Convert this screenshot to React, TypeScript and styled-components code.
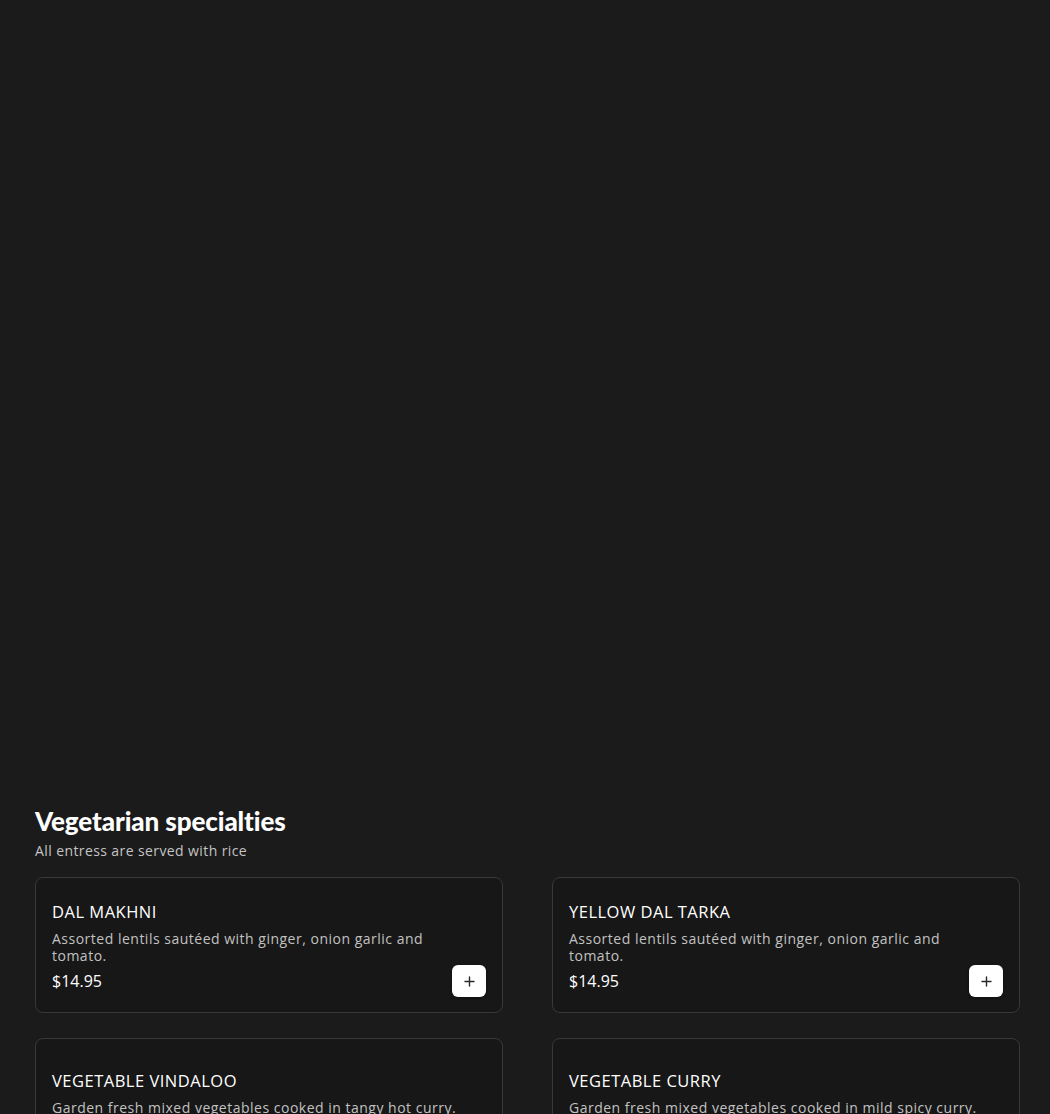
import React from "react";
import styled, { createGlobalStyle } from "styled-components";

const Global = createGlobalStyle`
  html, body { margin: 0; padding: 0; background: #1b1b1b; }
  body { font-family: "Open Sans", "Liberation Sans", sans-serif; color: #fff; }
  * { box-sizing: border-box; }
`;

const Page = styled.div`
  min-height: 1114px;
  background: #1b1b1b;
  overflow: hidden;
`;

const Hero = styled.div`
  height: 806px;
`;

const Section = styled.section`
  padding: 0 30px 0 35px;
`;

const Heading = styled.h2`
  margin: 0;
  font-family: "Lato", "Inter", sans-serif;
  font-weight: 900;
  font-size: 26px;
  line-height: 30px;
  letter-spacing: -0.1px;
  color: #fff;
`;

const Sub = styled.p`
  margin: 6px 0 0;
  font-size: 14px;
  line-height: 18px;
  letter-spacing: 0.4px;
  color: #c4c4c4;
`;

const Grid = styled.div`
  margin-top: 17px;
  display: grid;
  grid-template-columns: 1fr 1fr;
  column-gap: 49px;
  row-gap: 25px;
`;

const Card = styled.div<{ $top: number }>`
  background: #171717;
  border: 1px solid #383838;
  border-radius: 8px;
  padding: ${(p) => p.$top}px 16px 15px 16px;
  display: flex;
  flex-direction: column;
`;

const Title = styled.h3`
  margin: 0;
  font-size: 16.5px;
  line-height: 20px;
  font-weight: 500;
  color: #fff;
  letter-spacing: 0.5px;
`;

const Desc = styled.p`
  margin: 8px 0 0;
  font-size: 14px;
  line-height: 17px;
  letter-spacing: 0.5px;
  color: #c2c2c2;
  max-width: 415px;
`;

const Bottom = styled.div`
  display: flex;
  align-items: center;
  justify-content: space-between;
  margin-top: 1px;
`;

const Price = styled.span`
  font-size: 16px;
  line-height: 20px;
  color: #fff;
`;

const AddButton = styled.button`
  width: 34px;
  height: 32px;
  border: none;
  border-radius: 6px;
  background: #fff;
  display: flex;
  align-items: center;
  justify-content: center;
  padding: 0;
  box-shadow: 0 1px 3px rgba(0,0,0,0.4);
  cursor: pointer;
`;

const Plus = () => (
  <svg width="11" height="11" viewBox="0 0 11 11">
    <path d="M5.5 1v9M1 5.5h9" stroke="#2a2a2a" strokeWidth="1.4" strokeLinecap="round" />
  </svg>
);

const items = [
  { name: "DAL MAKHNI", desc: "Assorted lentils sautéed with ginger, onion garlic and tomato.", price: "$14.95", top: 24 },
  { name: "YELLOW DAL TARKA", desc: "Assorted lentils sautéed with ginger, onion garlic and tomato.", price: "$14.95", top: 24 },
  { name: "VEGETABLE VINDALOO", desc: "Garden fresh mixed vegetables cooked in tangy hot curry.", price: "$14.95", top: 32 },
  { name: "VEGETABLE CURRY", desc: "Garden fresh mixed vegetables cooked in mild spicy curry.", price: "$14.95", top: 32 },
];

export default function App() {
  return (
    <Page>
      <Global />
      <Hero />
      <Section>
        <Heading>Vegetarian specialties</Heading>
        <Sub>All entress are served with rice</Sub>
        <Grid>
          {items.map((it) => (
            <Card key={it.name} $top={it.top}>
              <Title>{it.name}</Title>
              <Desc>{it.desc}</Desc>
              <Bottom>
                <Price>{it.price}</Price>
                <AddButton aria-label="Add"><Plus /></AddButton>
              </Bottom>
            </Card>
          ))}
        </Grid>
      </Section>
    </Page>
  );
}
